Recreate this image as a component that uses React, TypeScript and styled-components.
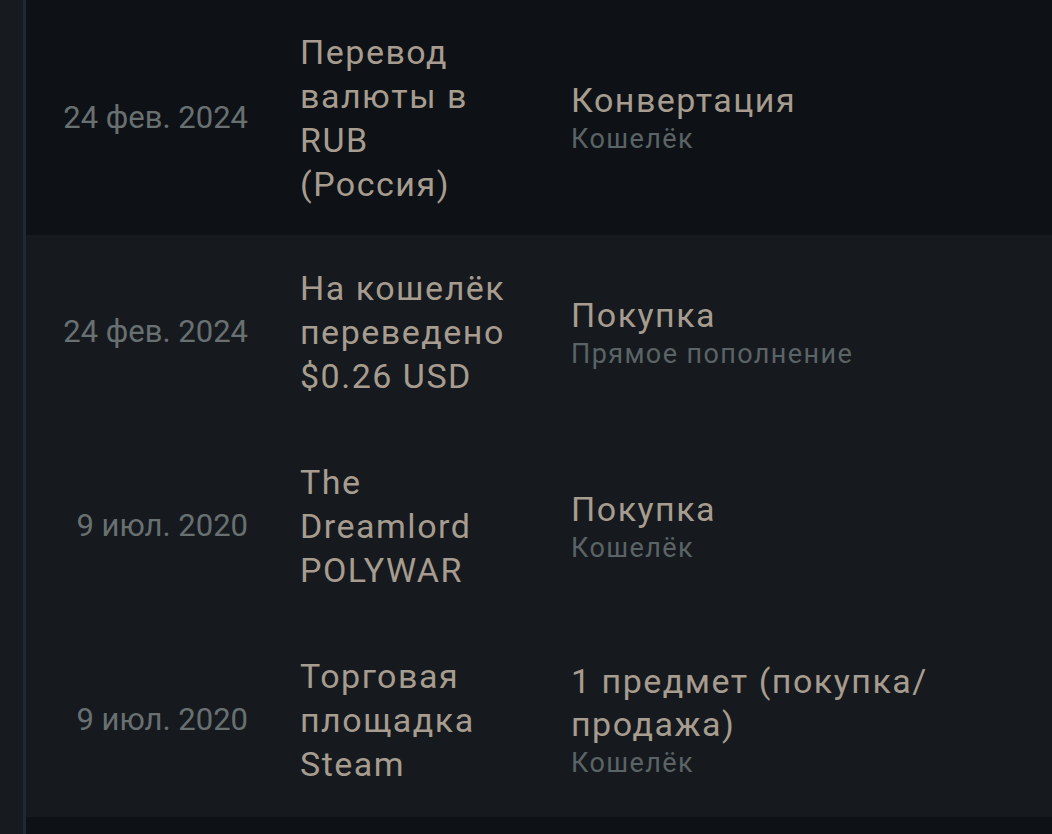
import React from "react";
import styled, { createGlobalStyle } from "styled-components";

const GlobalStyle = createGlobalStyle`
  html, body {
    margin: 0;
    padding: 0;
    background: #171b20;
    height: 100%;
    overflow: hidden;
  }
`;

const Page = styled.div`
  display: flex;
  height: 834px;
  font-family: Roboto, "Noto Sans", sans-serif;
  background: #171b20;
`;

const Gutter = styled.div`
  width: 23px;
  flex-shrink: 0;
  background: #171b20;
  border-right: 3px solid #1e2935;
`;

const Table = styled.div`
  flex: 1;
  display: flex;
  flex-direction: column;
  background: #0e1216;
`;

const Row = styled.div<{ $shade: "dark" | "light" }>`
  display: grid;
  grid-template-columns: 274px 271px 1fr;
  align-items: center;
  min-height: 194px;
  box-sizing: border-box;
  padding: 29.5px 0;
  background: ${(p) => (p.$shade === "dark" ? "#0e1216" : "#161a1e")};
`;

const DateCell = styled.div`
  text-align: right;
  padding-right: 52px;
  font-size: 31px;
  line-height: 44px;
  color: #687072;
`;

const NameCell = styled.div`
  padding-right: 56px;
  font-size: 34px;
  letter-spacing: 1.5px;
  line-height: 44px;
  color: #a69c8f;
`;

const TypeCell = styled.div`
  display: flex;
  flex-direction: column;
  padding-right: 60px;
`;

const TypeTitle = styled.div`
  font-size: 34px;
  letter-spacing: 1.5px;
  line-height: 43px;
  color: #a69c8f;
`;

const TypeSub = styled.div`
  font-size: 27px;
  letter-spacing: 1.4px;
  line-height: 34px;
  color: #5a6466;
`;

type Entry = {
  date: string;
  name: string;
  type: string;
  source: string;
};

const entries: Entry[] = [
  { date: "24 фев. 2024", name: "Перевод валюты в RUB (Россия)", type: "Конвертация", source: "Кошелёк" },
  { date: "24 фев. 2024", name: "На кошелёк переведено $0.26 USD", type: "Покупка", source: "Прямое пополнение" },
  { date: "9 июл. 2020", name: "The Dreamlord POLYWAR", type: "Покупка", source: "Кошелёк" },
  { date: "9 июл. 2020", name: "Торговая площадка Steam", type: "1 предмет (покупка/продажа)", source: "Кошелёк" },
];

export default function App() {
  return (
    <Page>
      <GlobalStyle />
      <Gutter />
      <Table>
        {entries.map((e, i) => (
          <Row key={i} $shade={i === 0 ? "dark" : "light"}>
            <DateCell>{e.date}</DateCell>
            <NameCell>{e.name}</NameCell>
            <TypeCell>
              <TypeTitle>{e.type}</TypeTitle>
              <TypeSub>{e.source}</TypeSub>
            </TypeCell>
          </Row>
        ))}
      </Table>
    </Page>
  );
}
